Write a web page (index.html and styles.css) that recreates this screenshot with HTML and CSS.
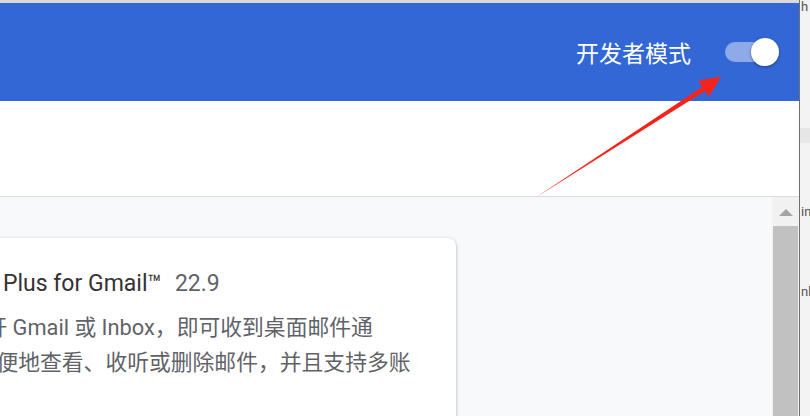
FILE: index.html
```html
<!DOCTYPE html>
<html lang="zh-CN">
<head>
<meta charset="utf-8">
<title>扩展程序</title>
<link rel="stylesheet" href="styles.css">
</head>
<body>
<div class="screen">
  <div class="window">
    <div class="topstrip"></div>
    <header class="header">
      <span class="dev-label">开发者模式</span>
      <div class="toggle" role="switch" aria-checked="true">
        <span class="track"></span>
        <span class="knob"></span>
      </div>
    </header>
    <div class="toolbar"></div>
    <div class="content">
      <div class="cards">
        <div class="card">
          <div class="title"><span class="name">Checker Plus for Gmail™</span><span class="version">22.9</span></div>
          <div class="desc">
            <span class="line l1">只要打开 Gmail 或 Inbox，即可收到桌面邮件通</span>
            <span class="line l2">知，方便地查看、收听或删除邮件，并且支持多账</span>
          </div>
        </div>
      </div>
      <div class="scrollbar">
        <div class="sb-btn"><span class="sb-arrow"></span></div>
        <div class="sb-thumb"></div>
      </div>
    </div>
  </div>
  <div class="divider"></div>
  <div class="behind">
    <span class="frag f1">h</span>
    <div class="band"></div>
    <span class="frag f2">in</span>
    <span class="frag f3">nh</span>
  </div>
  <svg class="annotation" width="810" height="416" viewBox="0 0 810 416" aria-hidden="true">
    <polygon points="535,198 702,87 698.5,80.5 721,76.5 709,96.5 705,91" fill="#f5241a"/>
  </svg>
</div>
</body>
</html>
```

FILE: styles.css
```css
* { box-sizing: border-box; }
html, body {
  margin: 0;
  padding: 0;
  width: 810px;
  height: 416px;
  overflow: hidden;
  background: #ffffff;
  font-family: Roboto, "Noto Sans CJK SC", sans-serif;
}
.screen {
  position: relative;
  display: flex;
  width: 810px;
  height: 416px;
}
.window {
  width: 799px;
  height: 416px;
  display: flex;
  flex-direction: column;
  background: #f8f9fa;
}
.topstrip {
  height: 3px;
  background: #dadada;
  flex: none;
}
.header {
  height: 98px;
  flex: none;
  background: #3367d6;
  display: flex;
  align-items: center;
  justify-content: flex-end;
  gap: 34px;
  padding-right: 20px;
}
.dev-label {
  color: #ffffff;
  font-size: 23px;
  line-height: 1;
  font-family: "Noto Sans CJK SC", Roboto, sans-serif;
}
.toggle {
  position: relative;
  width: 54px;
  height: 28px;
  display: flex;
  align-items: center;
}
.track {
  width: 46px;
  height: 20px;
  border-radius: 10px;
  background: #8eaae8;
}
.knob {
  position: absolute;
  right: 0;
  top: 0;
  width: 28px;
  height: 28px;
  border-radius: 50%;
  background: #ffffff;
  box-shadow: 0 1px 3px rgba(0, 0, 0, 0.4);
}
.toolbar {
  height: 96px;
  flex: none;
  background: #ffffff;
  border-bottom: 1px solid #dadce0;
}
.content {
  flex: 1;
  display: flex;
  min-height: 0;
}
.cards {
  flex: 1;
  padding-top: 41px;
  min-width: 0;
}
.card {
  margin-left: -100px;
  width: 556px;
  min-height: 260px;
  background: #ffffff;
  border-radius: 8px;
  box-shadow: 0 1px 2px rgba(60, 64, 67, 0.3), 0 1px 3px 1px rgba(60, 64, 67, 0.15);
  padding: 30px 0 0 14px;
}
.title {
  font-size: 23px;
  line-height: 32px;
  color: #333333;
  white-space: nowrap;
}
.version {
  color: #5f6368;
  margin-left: 13px;
}
.desc {
  margin-top: 10px;
  font-size: 21.8px;
  line-height: 35px;
  color: #5f6368;
}
.line {
  display: block;
  white-space: nowrap;
}
.l1 { margin-left: 6px; }
.l2 { margin-left: 17px; }
.scrollbar {
  width: 27px;
  flex: none;
  background: #f1f1f1;
  display: flex;
  flex-direction: column;
}
.sb-btn {
  height: 29px;
  flex: none;
  display: flex;
  justify-content: center;
  padding-top: 12px;
}
.sb-arrow {
  width: 0;
  height: 0;
  border-left: 7px solid transparent;
  border-right: 7px solid transparent;
  border-bottom: 7px solid #a3a3a3;
}
.sb-thumb {
  flex: 1;
  margin: 0 1px;
  background: #c1c1c1;
}
.divider {
  width: 1px;
  height: 416px;
  background: #6f6f6f;
}
.behind {
  width: 10px;
  height: 416px;
  background: #f3f3f3;
  display: flex;
  flex-direction: column;
  overflow: hidden;
  font-family: Roboto, sans-serif;
  font-size: 13px;
  line-height: 14px;
  color: #555555;
  padding-left: 1px;
}
.frag { display: block; white-space: nowrap; }
.f1 { margin-top: 0; }
.band {
  margin-top: 114px;
  height: 15px;
  background: #e6e6e6;
  margin-left: -1px;
}
.f2 { margin-top: 62px; }
.f3 { margin-top: 66px; }
.annotation {
  position: absolute;
  left: 0;
  top: 0;
  pointer-events: none;
}
```
